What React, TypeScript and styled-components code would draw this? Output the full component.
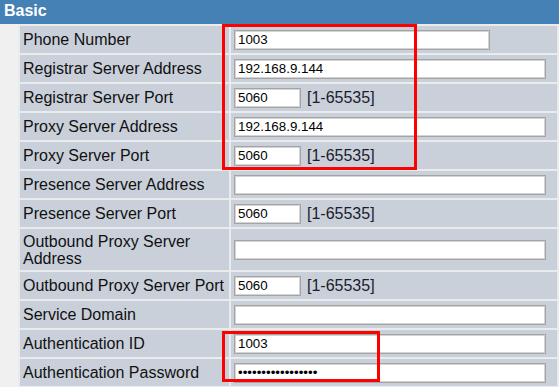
import * as React from "react";
import styled, { createGlobalStyle } from "styled-components";

const GlobalStyle = createGlobalStyle`
  html, body {
    margin: 0;
    padding: 0;
    background: #f0f0f0;
  }
  body {
    font-family: "Liberation Sans", Arial, sans-serif;
  }
`;

const Page = styled.div`
  position: relative;
  width: 559px;
  height: 387px;
  overflow: hidden;
  background: #f0f0f0;
`;

const TitleBar = styled.div`
  height: 24px;
  line-height: 22px;
  padding-left: 4px;
  background: #4581b5;
  color: #fff;
  font-weight: bold;
  font-size: 16px;
`;

const Table = styled.table`
  margin-left: 18px;
  width: 541px;
  border-collapse: separate;
  border-spacing: 2px;
  background: #eaebed;
`;

const LabelCell = styled.td`
  width: 206px;
  height: 27px;
  padding: 0 0 0 3px;
  background: #c9d0da;
  color: #111;
  font-size: 16px;
  line-height: 17px;
  vertical-align: middle;
`;

const ValueCell = styled.td<{ $tall?: boolean }>`
  height: ${(p) => (p.$tall ? "41px" : "27px")};
  padding: 0 0 0 3px;
  background: #c9d0da;
  vertical-align: middle;
  white-space: nowrap;
`;

const TextInput = styled.input<{ $w: number }>`
  box-sizing: border-box;
  display: inline-block;
  vertical-align: middle;
  width: ${(p) => p.$w}px;
  height: 20px;
  margin: 0;
  padding: 0 3px;
  border: 1px solid #a4a4a4;
  box-shadow: inset 0 0 0 1px #d4d4d4;
  background: #fff;
  color: #000;
  font-family: "Liberation Sans", Arial, sans-serif;
  font-size: 13.33px;
  outline: none;
`;

const RangeHint = styled.span`
  display: inline-block;
  vertical-align: middle;
  margin-left: 6px;
  font-size: 16px;
  color: #1c1c2c;
`;

const Annotation = styled.div<{ $top: number; $left: number; $w: number; $h: number }>`
  position: absolute;
  top: ${(p) => p.$top}px;
  left: ${(p) => p.$left}px;
  width: ${(p) => p.$w}px;
  height: ${(p) => p.$h}px;
  box-sizing: border-box;
  border: 3px solid #ff0000;
  pointer-events: none;
`;

type Field = {
  label: string;
  value?: string;
  width: number;
  range?: boolean;
  password?: boolean;
  tall?: boolean;
};

const fields: Field[] = [
  { label: "Phone Number", value: "1003", width: 256 },
  { label: "Registrar Server Address", value: "192.168.9.144", width: 312 },
  { label: "Registrar Server Port", value: "5060", width: 67, range: true },
  { label: "Proxy Server Address", value: "192.168.9.144", width: 312 },
  { label: "Proxy Server Port", value: "5060", width: 67, range: true },
  { label: "Presence Server Address", value: "", width: 312 },
  { label: "Presence Server Port", value: "5060", width: 67, range: true },
  { label: "Outbound Proxy Server Address", value: "", width: 312, tall: true },
  { label: "Outbound Proxy Server Port", value: "5060", width: 67, range: true },
  { label: "Service Domain", value: "", width: 312 },
  { label: "Authentication ID", value: "1003", width: 312 },
  { label: "Authentication Password", value: "0123456789abcdefg", width: 312, password: true },
];

const App = () => (
  <Page>
    <GlobalStyle />
    <TitleBar>Basic</TitleBar>
    <Table>
      <tbody>
        {fields.map((f) => (
          <tr key={f.label}>
            <LabelCell>{f.label}</LabelCell>
            <ValueCell $tall={f.tall}>
              <TextInput
                $w={f.width}
                type={f.password ? "password" : "text"}
                defaultValue={f.value}
              />
              {f.range && <RangeHint>[1-65535]</RangeHint>}
            </ValueCell>
          </tr>
        ))}
      </tbody>
    </Table>
    <Annotation $top={24} $left={222} $w={195} $h={146} />
    <Annotation $top={331} $left={222} $w={158} $h={51} />
  </Page>
);

export default App;
